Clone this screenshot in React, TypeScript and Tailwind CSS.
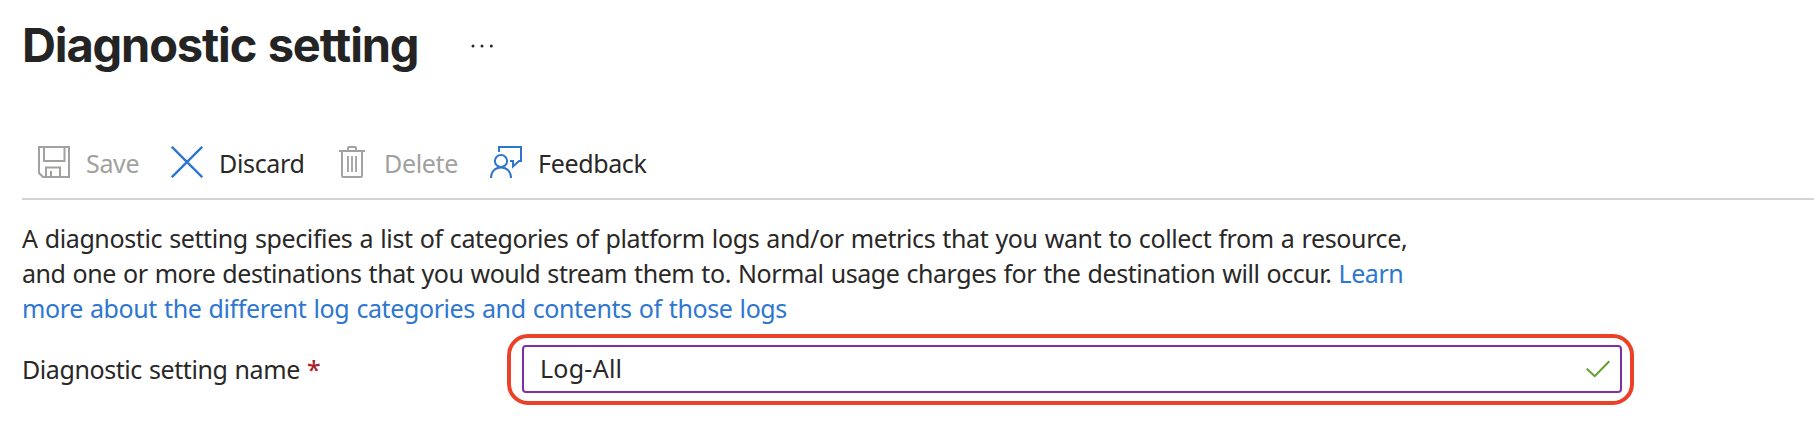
import React from 'react';

const SaveIcon = () => (
  <svg width="32" height="32" viewBox="0 0 32 32" fill="none" stroke="#a2a1a0" strokeWidth="2" className="block">
    <path d="M1 1H31V31H5L1 27Z" />
    <path d="M6 1V15H26.500V1" />
    <path d="M8 31V21.500H22V31" />
    <path d="M13 25V31" />
  </svg>
);

const DiscardIcon = () => (
  <svg width="32" height="32" viewBox="0 0 32 32" fill="none" stroke="#2e77d0" strokeWidth="2.400" className="block">
    <path d="M0.800 0.800L31.200 31.200M31.200 0.800L0.800 31.200" />
  </svg>
);

const DeleteIcon = () => (
  <svg width="26" height="32" viewBox="0 0 26 32" fill="none" stroke="#a2a1a0" strokeWidth="2" className="block">
    <path d="M0 5H26" />
    <path d="M9 5V2Q9 1 10 1H16Q17 1 17 2V5" />
    <path d="M3 5V29.500Q3 31 4.500 31H21.500Q23 31 23 29.500V5" />
    <path d="M9 10V26M13 10V26M17 10V26" strokeWidth="1.800" />
  </svg>
);

const FeedbackIcon = () => (
  <svg width="32" height="32" viewBox="0 0 32 32" fill="none" stroke="#2e77d0" strokeWidth="2" className="block">
    <path d="M9 6V1H31V15H29L23 20.500V15H20" />
    <circle cx="11" cy="15" r="6.100" />
    <path d="M1 32C1 25.800 5 21.400 11 21.400S21 25.800 21 32" />
  </svg>
);

export default function App() {
  return (
    <div className="h-[424px] w-[1814px] overflow-hidden bg-white font-['Noto_Sans',sans-serif] text-[25px] leading-[35px] text-[#292827]">
      <header className="flex h-[140px] pl-[22px] pt-[15px]">
        <h1 className="w-[448px] whitespace-nowrap font-['Inter',sans-serif] text-[47px] font-bold leading-[60px] tracking-[-1.150px] text-[#242424] [word-spacing:1.500px]">
          Diagnostic setting
        </h1>
        <svg width="25" height="6" viewBox="0 0 25 6" fill="#292827" className="mt-[28px]">
          <circle cx="3" cy="3" r="1.500" />
          <circle cx="12" cy="3" r="1.500" />
          <circle cx="21.300" cy="3" r="1.500" />
        </svg>
      </header>

      <div className="ml-[22px] flex h-[60px] border-b-2 border-[#d4d4d4] pl-4 pt-[6px] tracking-[-0.350px]">
        <button className="flex w-[133px] gap-[16px] text-[#a2a1a0]">
          <SaveIcon />
          <span>Save</span>
        </button>
        <button className="flex w-[168px] gap-[16px]">
          <DiscardIcon />
          <span>Discard</span>
        </button>
        <button className="flex w-[151px] gap-[19px] text-[#a2a1a0]">
          <DeleteIcon />
          <span>Delete</span>
        </button>
        <button className="flex gap-[16px]">
          <FeedbackIcon />
          <span>Feedback</span>
        </button>
      </div>

      <p className="h-[134px] whitespace-nowrap pl-[22px] pt-[21px] [word-spacing:1px]">
        <span className="tracking-[-0.390px]">A diagnostic setting specifies a list of categories of platform logs and/or metrics that you want to collect from a resource,</span>
        <br />
        <span className="tracking-[-0.440px]">and one or more destinations that you would stream them to. Normal usage charges for the destination will occur. <a className="text-[#2e77d0]">Learn</a></span>
        <br />
        <a className="tracking-[-0.400px] text-[#2e77d0]">more about the different log categories and contents of those logs</a>
      </p>

      <div className="flex pl-[22px]">
        <label className="w-[485px] whitespace-nowrap pt-[18px] tracking-[-0.420px] [word-spacing:1px]">
          Diagnostic setting name <span className="font-medium text-[#a4262c]">*</span>
        </label>
        <div className="h-[71px] w-[1127px] rounded-[21px] border-4 border-[#eb4128] pb-[8px] pl-[11px] pr-[8px] pt-[7px]">
          <div className="flex h-[48px] items-center justify-between rounded-[4px] border-2 border-[#8230a0] pl-[16px] pr-[10px]">
            <span className="-mt-px tracking-[0.250px]">Log-All</span>
            <svg width="24" height="18" viewBox="0 0 24 18" fill="none" stroke="#5fa12c" strokeWidth="2" className="mb-px">
              <path d="M0.700 8.700L8.700 16.200L23.300 1.200" />
            </svg>
          </div>
        </div>
      </div>
    </div>
  );
}
